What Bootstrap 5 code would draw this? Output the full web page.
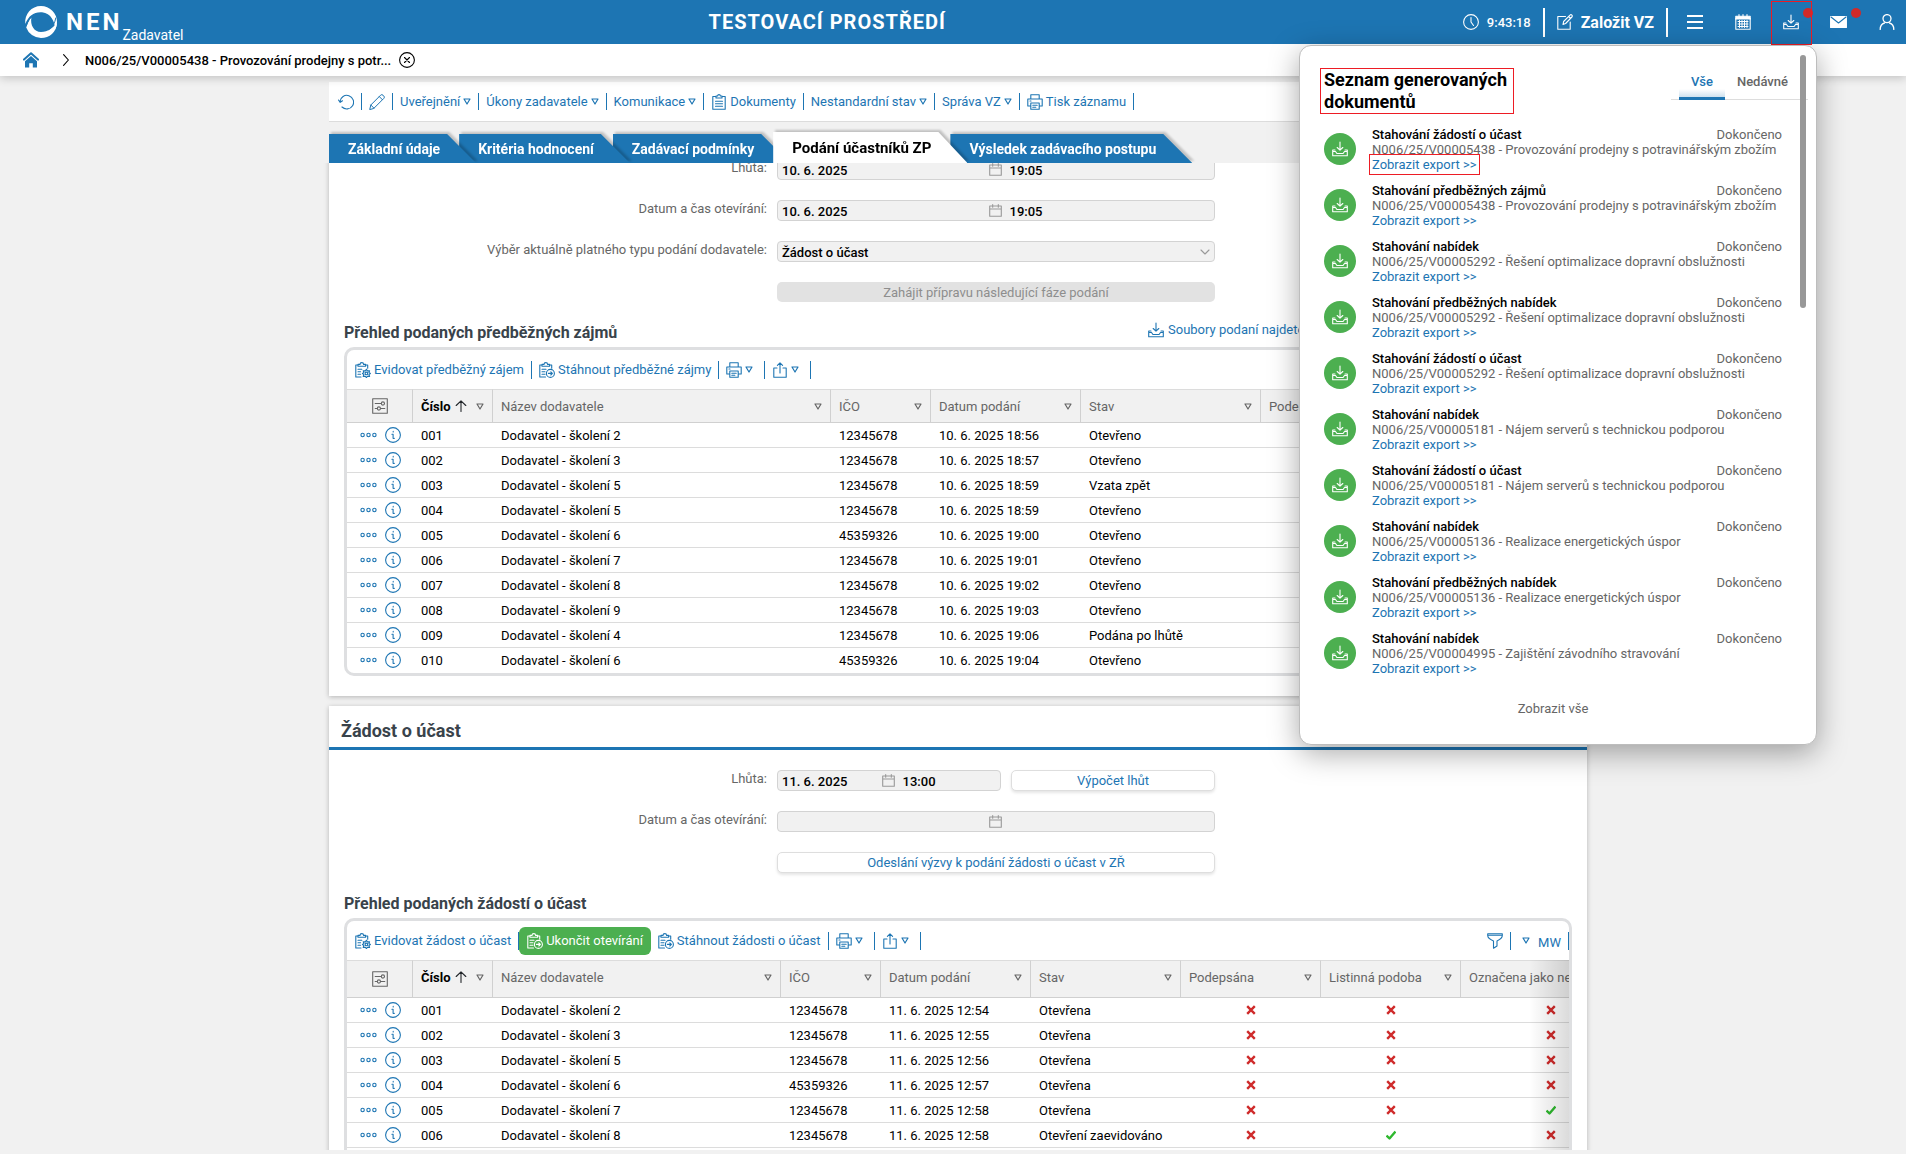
<!DOCTYPE html>
<html lang="cs">
<head>
<meta charset="utf-8">
<meta name="viewport" content="width=device-width, initial-scale=1">
<title>NEN Zadavatel</title>
<link href="https://cdn.jsdelivr.net/npm/bootstrap@5.3.0/dist/css/bootstrap.min.css" rel="stylesheet">
<style>
:root{--nen:#1d75b3;--line:#dcdcdc;--soft:#f1f1f1;--mute:#666}
body{font-family:Roboto,"Liberation Sans",sans-serif;font-size:13px;line-height:15px;color:#000;background:var(--soft)}
svg{display:block;flex:none;fill:none;stroke:currentColor;stroke-width:1.1;stroke-linecap:round;stroke-linejoin:round}
a{color:var(--nen);text-decoration:none}
button{color:inherit}
.ico{width:16px;height:16px}
.tri{width:8px;height:7px;stroke-width:1.2}
.plain{border:0;background:none;padding:0;font:inherit}
/* top bar */
.topbar{height:44px;background:var(--nen);color:#fff;z-index:30}
.topbar a{color:#fff}
.brand-name{font-size:24px;line-height:24px;font-weight:700;letter-spacing:3px}
.brand-role{font-size:14px;line-height:16px;padding-top:26px}
.env{font-size:20px;line-height:24px;font-weight:700;letter-spacing:1px}
.bar-sep{width:2px;height:29px;background:#fff}
.clock{font-weight:500}
.create{font-size:16px;font-weight:700}
.tools{gap:10px}
.tool{width:38px;height:40px}
.dot{width:10px;height:10px;top:6px;right:-3px;background:#d02a2a;border-radius:50%}
.hot::after{content:"";position:absolute;inset:-1px -2px -3px -1px;border:1px solid #ed1c24}
/* breadcrumb */
.crumbs{height:32px;background:#fff;box-shadow:0 2px 10px rgba(0,0,0,.2);z-index:20;padding-left:23px}
.crumbs strong{font-weight:500}
/* page column */
.page{width:1258px;max-width:100%}
.page-wrap{padding-left:10px;padding-top:6px;margin-bottom:4px;min-height:0}
.record-bar{height:40px;background:#fff;border-bottom:1px solid var(--line);color:var(--nen);padding-left:2px}
.act{display:flex;align-items:center;gap:3px;padding:0 7px;height:17px;border-right:1px solid var(--nen);color:var(--nen);white-space:nowrap}
.tabs{height:41px}
.tab-shell{filter:drop-shadow(2px -2px 1px rgba(0,0,0,.2));margin-right:-17px;position:relative;z-index:3}
.tab-shell:nth-child(1){z-index:5}.tab-shell:nth-child(2){z-index:4}.tab-shell:nth-child(4){z-index:6}.tab-shell:nth-child(5){z-index:1}
.tab-btn{height:29px;padding:1px 36px 0 19px;border:0;background:var(--nen);color:#fff;font-size:14px;font-weight:700;clip-path:polygon(0 0,calc(100% - 29px) 0,100% 100%,0 100%);white-space:nowrap}
.tab-btn.current{height:31px;background:#fff;color:#000;font-size:15px}
.scroller{overflow:hidden;min-height:0}
.sheet{background:#fff;box-shadow:0 1px 5px rgba(0,0,0,.25)}
.sheet-first{margin-top:-4px;padding-bottom:20px;margin-bottom:10px}
/* form */
.frow{display:grid;grid-template-columns:minmax(0,448fr) minmax(0,438fr) minmax(0,372fr);margin-bottom:20px;height:21px}
.frow label{text-align:right;padding:1px 10px 0 0;color:var(--mute)}
.duo{gap:10px}
.duo .box{flex-grow:11}
.duo .ghost{flex:10 1 0}
.box{height:21px;border:1px solid #d3d3d3;border-radius:4px;background:var(--soft);color:#999;flex:1 1 0;min-width:0}
.box input{border:0;background:none;font-size:13px;font-weight:500;line-height:15px;color:#000;padding:2px 0 0 4px;flex:1 1 0;min-width:0}
.box input+svg+input{padding-left:8px}
.box .cal{width:13px;height:13px;margin-left:2px}
.pick{width:100%;appearance:none;border:0;background:none;padding:1px 4px 0;font-weight:500;line-height:17px;color:#000}
.wide{height:20px;border:0;border-radius:5px;background:#e2e2e2;color:#8e8e8e;width:100%;padding:0}
.ghost{background:#fff;border:1px solid #dedede;color:var(--nen);box-shadow:0 2px 3px rgba(0,0,0,.1);height:21px}
.sheet-title + .frow{margin-top:20px}
h3.sub{font-size:16px;line-height:18px;font-weight:700;color:#39434b;margin:0;padding:2px 15px 5px}
.sub-row{padding-top:19px}
.files{width:439px}
.sheet-title{font-size:18px;line-height:22px;font-weight:700;color:#39434b;margin:0;padding:14px 12px 5px;border-bottom:3px solid var(--nen)}
/* grid panel */
.gridbox{border:3px solid #dedfe1;border-radius:10px;margin:0 15px;overflow:hidden;position:relative}
.gridbar{height:39px;padding-left:1px}
.gridbar .act{height:18px}
.go{height:28px;border:0;border-radius:6px;background:#4caf50;color:#fff;padding:0 8px;gap:3px}
.fade-end::after{content:"";position:absolute;right:0;top:39px;bottom:0;width:40px;background:linear-gradient(90deg,rgba(0,0,0,0),rgba(0,0,0,.14))}
.dtab{table-layout:fixed;border-collapse:separate;border-spacing:0}
.dtab th{font-weight:400;color:var(--mute);background:var(--soft);border-top:1px solid var(--line);border-bottom:1px solid #d0d0d0;border-right:1px solid #d0d0d0;padding:0 8px;height:34px;white-space:nowrap;overflow:hidden}
.tall th{height:38px}
.tall th+th{padding-bottom:4px}
.dtab th b{color:#000;font-weight:700}
.dtab td{height:25px;border-bottom:1px solid var(--line);padding:0 8px;white-space:nowrap}
.dtab tr:last-child td{border-bottom-color:transparent}
.rowtools{color:var(--nen)}
.dtab td svg.flag{margin:auto;width:10px;height:10px;stroke-width:2.4;stroke-linecap:butt}
.dtab td .flagok{color:#2eb82e}.dtab td .flagno{color:#cf2b2b}
/* generated documents */
.drop{position:absolute;top:45px;right:89px;width:518px;background:#fff;border:1px solid #bdbdbd;border-radius:12px;box-shadow:0 8px 30px rgba(0,0,0,.35);color:#000;padding:22px 34px 28px 24px}
.drop h2{font-size:18px;line-height:22px;font-weight:700;margin:0 0 0 -4px;width:194px;border:1px solid #ed1c24;padding:0 3px}
.drop .bar{position:absolute;right:10px;top:9px;width:6px;height:253px;border-radius:3px;background:#989898}
.swap{border-bottom:1px solid #ddd;margin-right:-26px;padding:0 8px;height:32px;color:#666;font-weight:500}
.swap button{padding:0 12px 6px;height:32px;font-weight:500}
.swap .now{color:var(--nen);padding-bottom:3px;border-bottom:3px solid var(--nen);background:linear-gradient(0deg,rgba(29,117,179,.22),rgba(29,117,179,0) 8px)}
.docs{margin:13px 0 25px}
.doc{margin-bottom:11px}
.doc:last-child{margin-bottom:0}
.disc{width:32px;height:32px;border-radius:50%;background:#4caf50;color:#fff;margin-bottom:2px}
.doc strong{font-weight:500}
.doc .note{color:#666}
.boxed{outline:1px solid #ed1c24;outline-offset:2px}
.drop a.all{color:#666}
.doc a{color:var(--nen)}
</style>
<script src="https://cdn.jsdelivr.net/npm/bootstrap@5.3.0/dist/js/bootstrap.bundle.min.js"></script>
</head>
<body class="vh-100 overflow-hidden d-flex flex-column">
<svg width="0" height="0" class="position-absolute" aria-hidden="true">
<symbol id="down" viewBox="0 0 16 16"><path d="M8 1v8M5.2 6.5 8 9.2l2.8-2.7M3 9H.7v5.8h14.6V9H13M.9 10.5h2.6l1.4 2h6.2l1.4-2h2.6"/></symbol>
<symbol id="print" viewBox="0 0 16 16"><path d="M3.8 5V.8h8.4V5M3.8 12H.8V5h14.4v7h-3M3.8 9h8.4v6.3H3.8zM5.8 11.2h4.4M5.8 13.2h3M3 7h1"/></symbol>
<symbol id="share" viewBox="0 0 16 16"><path d="M5 6H1.8v9.3h12.4V6H11M8 11V1M5.4 3.4 8 .8l2.6 2.6"/></symbol>
<symbol id="tri" viewBox="0 0 8 7"><path d="M1 1h6L4 6z"/></symbol>
<symbol id="board" viewBox="0 0 16 16"><path d="M5 2.5H1.8v12.8h12.4V2.5H11M5 4V2h1.6a1.4 1.4 0 0 1 2.8 0H11v2zM4.5 7.2h7M4.5 9.7h7M4.5 12.2h7"/></symbol>
<symbol id="boardgear" viewBox="0 0 16 16"><path d="M6 15H.8V3H3M10.5 3h2.2v3.2M3 4.3V2.4h2a1.8 1.8 0 0 1 3.6 0h2v1.9zM3 7.2h3.8M3 9.7h2.6M3 12.2h2.6"/><circle cx="11.4" cy="11.4" r="1.3"/><path d="m11.4 7.2 1 1.7 2.2-.2-.7 1.8 1.5 1-1.5 1 .7 1.9-2.2-.2-1 1.400-1-1.400-2.200.2.7-1.900-1.500-1 1.500-1-.7-1.800 2.200.2z"/></symbol>
<symbol id="boardgo" viewBox="0 0 16 16"><path d="M6.5 15H.8V3H3M10.5 3h2.2v3.2M3 4.3V2.4h2a1.8 1.8 0 0 1 3.6 0h2v1.9zM3 7.2h4M3 9.7h3M3 12.2h3"/><circle cx="11.4" cy="11.4" r="4"/><path d="M9.4 11.4h3.8M11.8 9.8l1.6 1.6-1.6 1.6"/></symbol>
<symbol id="cal" viewBox="0 0 13 13"><path d="M.7 2h11.6v10.3H.7zM.7 5h11.6M3.7.6v2.6M9.3.6v2.6"/></symbol>
<symbol id="dots" viewBox="0 0 17 16"><circle cx="2.6" cy="8" r="1.7"/><circle cx="8.5" cy="8" r="1.7"/><circle cx="14.4" cy="8" r="1.7"/></symbol>
<symbol id="info" viewBox="0 0 16 16"><circle cx="8" cy="8" r="7.4"/><path d="M8.2 4.4v.6M6.9 7.3h1.2v3.6q0 .8 1.2.5"/></symbol>
<symbol id="setup" viewBox="0 0 16 16"><path d="M.7.7h14.6v14.6H.7zM3.2 5.5h6M3.2 10.5h2M8.6 10.5h4.2"/><circle cx="10.9" cy="5.5" r="1.6"/><circle cx="6.9" cy="10.5" r="1.6"/></symbol>
<symbol id="up" viewBox="0 0 12 12"><path d="M6 11.5V1M1.2 5.5 6 .8l4.8 4.7"/></symbol>
<symbol id="no" viewBox="0 0 10 10"><path d="m1.2 1.2 7.6 7.6M8.8 1.2 1.2 8.8"/></symbol>
<symbol id="ok" viewBox="0 0 10 10"><path d="m.5 5.5 3 3 6-7"/></symbol>
</svg>

<header class="topbar position-relative d-flex align-items-center justify-content-between flex-shrink-0">
  <a href="#" class="d-flex align-items-center ps-4">
    <svg width="34" height="34" viewBox="0 0 34 34"><g fill="#fff" stroke="none"><path d="M17 1a16 16 0 0 1 16 16c0 3-.7 5.2-2 7.500C31.200 17 27 8 18 7.200 10 6.600 4.600 10.500 1.300 19 .3 9 7.500 1 17 1z"/><path d="M17 33A16 16 0 0 1 2.200 22.500C4 17 5 15 7.400 12.500 6 20 10 27 17 27c7 0 13-5 15.900-9C32.500 27 25.500 33 17 33z"/></g><path d="M2.200 21C4 16 6 12.500 9.500 9.800M31.800 13C31 18 28.500 21.500 25 24.500" stroke="#1d75b3" stroke-width="1"/></svg>
    <span class="brand-name ps-2">NEN</span><span class="brand-role">Zadavatel</span>
  </a>
  <span class="env ps-2">TESTOVACÍ PROSTŘEDÍ</span>
  <div class="d-flex align-items-center">
    <svg class="ico me-2" viewBox="0 0 16 16"><circle cx="8" cy="8" r="7.4"/><path d="M8 3.5V8l2.5 3.5"/></svg>
    <span class="clock me-2">9:43:18</span>
    <span class="bar-sep ms-1 me-2"></span>
    <a href="#" class="d-flex align-items-center gap-2 px-1"><svg class="ico" viewBox="0 0 16 16"><path d="M8.5 2.5H.8v12.7h12.4V8M6 10.5l.6-3L13 1.100a1.300 1.300 0 0 1 1.900 1.900L8.600 9.500zM11.600 2.500l1.900 1.900"/></svg><span class="create">Založit VZ</span></a>
    <span class="bar-sep ms-2"></span>
    <div class="tools d-flex ms-2">
      <button class="plain tool d-flex align-items-center justify-content-center" aria-label="Menu"><svg class="ico" viewBox="0 0 16 16"><path stroke-width="2" stroke-linecap="butt" d="M0 2h16M0 8h16M0 14h16"/></svg></button>
      <button class="plain tool d-flex align-items-center justify-content-center" aria-label="Kalendář"><svg class="ico" viewBox="0 0 16 16"><path d="M.8 5V2.300h14.400V5z" fill="#fff"/><path d="M.8 4.500v10.700h14.400V4.500M4 .6v2M8 .6v2M12 .6v2"/><path stroke-width="1" d="M3 7.500h10M3 10h10M3 12.500h10M4.500 6.500v7M7 6.500v7M9.500 6.500v7M12 6.500v7"/></svg></button>
      <button class="plain tool hot position-relative d-flex align-items-center justify-content-center" aria-label="Generované dokumenty"><svg class="ico"><use href="#down"/></svg><span class="dot position-absolute"></span></button>
      <button class="plain tool position-relative d-flex align-items-center justify-content-center" aria-label="Zprávy"><svg width="17" height="12" viewBox="0 0 17 12"><path d="M.6.6h15.800v10.800H.6z" fill="#fff"/><path d="M1 1l7.500 6L16 1" stroke="#1d75b3"/></svg><span class="dot position-absolute"></span></button>
      <button class="plain tool d-flex align-items-center justify-content-center" aria-label="Uživatel"><svg class="ico" viewBox="0 0 16 16"><g stroke-width="1.3"><circle cx="8" cy="4.600" r="4"/><path d="M1.200 15.500c0-4 2.500-6 4.300-6.500M14.800 15.500c0-4-2.500-6-4.300-6.500"/></g></svg></button>
    </div>
  </div>

  <section class="drop">
    <span class="bar"></span>
    <div class="d-flex justify-content-between">
      <h2>Seznam generovaných dokumentů</h2>
      <div class="swap d-flex"><button class="plain now">Vše</button><button class="plain">Nedávné</button></div>
    </div>
    <div class="docs" id="docs"></div>
    <div class="text-center"><a class="all" href="#">Zobrazit vše</a></div>
  </section>
</header>

<nav class="crumbs d-flex align-items-center position-relative flex-shrink-0" aria-label="Drobečková navigace">
  <a href="#" aria-label="Domů"><svg class="ico" viewBox="0 0 16 16"><path d="M1 7.600 8 1.200l7 6.400" stroke-width="2"/><path d="M2 9.300 8 4l6 5.300V15.500H9.800v-4.300H6.200v4.300H2z" fill="currentColor" stroke="none"/></svg></a>
  <svg class="ms-4 me-3" width="6" height="12" viewBox="0 0 6 12"><path d="M.6.6 5.400 6 .6 11.400"/></svg>
  <strong>N006/25/V00005438 - Provozování prodejny s potr...</strong>
  <button class="plain ms-2" aria-label="Zavřít"><svg class="ico" viewBox="0 0 16 16"><circle cx="8" cy="8" r="7.400"/><path d="m5.500 5.500 5 5M10.500 5.500l-5 5"/></svg></button>
</nav>

<main class="page-wrap flex-grow-1 d-flex flex-column align-items-center">
  <div class="page record-bar d-flex align-items-center flex-shrink-0">
    <a href="#" class="act" aria-label="Obnovit"><svg class="ico" viewBox="0 0 16 16"><path d="M2 7.500A6.800 6.800 0 1 1 4 13M.5 6 2.200 8.300 4.500 6.800"/></svg></a>
    <a href="#" class="act" aria-label="Upravit"><svg class="ico" viewBox="0 0 16 16"><path stroke-width="1" d="m.8 15.200 1-4.200L11.600 1.200a1.700 1.700 0 0 1 2.400 0l.8.800a1.700 1.700 0 0 1 0 2.400L5 14.200zM1.800 11 5 14.200M10.300 2.600l3.100 3.100"/></svg></a>
    <a href="#" class="act">Uveřejnění <svg class="tri"><use href="#tri"/></svg></a>
    <a href="#" class="act">Úkony zadavatele <svg class="tri"><use href="#tri"/></svg></a>
    <a href="#" class="act">Komunikace <svg class="tri"><use href="#tri"/></svg></a>
    <a href="#" class="act"><svg class="ico"><use href="#board"/></svg>Dokumenty</a>
    <a href="#" class="act">Nestandardní stav <svg class="tri"><use href="#tri"/></svg></a>
    <a href="#" class="act">Správa VZ <svg class="tri"><use href="#tri"/></svg></a>
    <a href="#" class="act"><svg class="ico"><use href="#print"/></svg>Tisk záznamu</a>
  </div>
  <div class="page tabs d-flex align-items-end flex-shrink-0">
    <div class="tab-shell"><button class="tab-btn">Základní údaje</button></div>
    <div class="tab-shell"><button class="tab-btn">Kritéria hodnocení</button></div>
    <div class="tab-shell"><button class="tab-btn">Zadávací podmínky</button></div>
    <div class="tab-shell"><button class="tab-btn current">Podání účastníků ZP</button></div>
    <div class="tab-shell"><button class="tab-btn">Výsledek zadávacího postupu</button></div>
  </div>

  <div class="scroller w-100 flex-grow-1">
    <section class="page sheet sheet-first mx-auto">
      <div class="frow"><label for="d1">Lhůta:</label>
        <div class="box d-flex align-items-center"><input id="d1" value="10. 6. 2025"><svg class="cal"><use href="#cal"/></svg><input aria-label="Čas lhůty" value="19:05"></div></div>
      <div class="frow"><label for="d2">Datum a čas otevírání:</label>
        <div class="box d-flex align-items-center"><input id="d2" value="10. 6. 2025"><svg class="cal"><use href="#cal"/></svg><input aria-label="Čas otevírání" value="19:05"></div></div>
      <div class="frow"><label for="d3">Výběr aktuálně platného typu podání dodavatele:</label>
        <div class="box d-flex align-items-center pe-1"><select id="d3" class="pick"><option>Žádost o účast</option></select><svg width="10" height="6" viewBox="0 0 10 6"><path d="m1 1 4 4 4-4"/></svg></div></div>
      <div class="frow mb-0"><span></span><button class="wide" disabled>Zahájit přípravu následující fáze podání</button></div>
      <div class="sub-row d-flex justify-content-between">
        <h3 class="sub">Přehled podaných předběžných zájmů</h3>
        <a href="#" class="files d-flex gap-1 text-nowrap align-items-start"><svg class="ico"><use href="#down"/></svg>Soubory podaní najdete v seznamu generovaných dokumentů</a>
      </div>
      <div class="gridbox">
        <div class="gridbar d-flex align-items-center">
          <a href="#" class="act"><svg class="ico"><use href="#boardgear"/></svg>Evidovat předběžný zájem</a>
          <a href="#" class="act"><svg class="ico"><use href="#boardgo"/></svg>Stáhnout předběžné zájmy</a>
          <a href="#" class="act" aria-label="Tisk"><svg class="ico"><use href="#print"/></svg><svg class="tri me-1"><use href="#tri"/></svg></a>
          <a href="#" class="act" aria-label="Export"><svg class="ico"><use href="#share"/></svg><svg class="tri me-1"><use href="#tri"/></svg></a>
        </div>
        <table class="dtab" id="t1"></table>
      </div>
    </section>
    <section class="page sheet mx-auto">
      <h2 class="sheet-title">Žádost o účast</h2>
      <div class="frow"><label for="e1">Lhůta:</label>
        <div class="duo d-flex"><div class="box d-flex align-items-center"><input id="e1" value="11. 6. 2025"><svg class="cal"><use href="#cal"/></svg><input aria-label="Čas lhůty" value="13:00"></div><button class="wide ghost">Výpočet lhůt</button></div></div>
      <div class="frow"><label for="e2">Datum a čas otevírání:</label>
        <div class="box d-flex align-items-center"><input id="e2"><svg class="cal"><use href="#cal"/></svg><input aria-label="Čas otevírání"></div></div>
      <div class="frow"><span></span><button class="wide ghost">Odeslání výzvy k podání žádosti o účast v ZŘ</button></div>
      <h3 class="sub">Přehled podaných žádostí o účast</h3>
      <div class="gridbox fade-end">
        <div class="gridbar d-flex align-items-center">
          <a href="#" class="act"><svg class="ico"><use href="#boardgear"/></svg>Evidovat žádost o účast</a>
          <button class="go d-flex align-items-center"><svg class="ico"><use href="#boardgo"/></svg>Ukončit otevírání</button>
          <a href="#" class="act"><svg class="ico"><use href="#boardgo"/></svg>Stáhnout žádosti o účast</a>
          <a href="#" class="act" aria-label="Tisk"><svg class="ico"><use href="#print"/></svg><svg class="tri me-1"><use href="#tri"/></svg></a>
          <a href="#" class="act" aria-label="Export"><svg class="ico"><use href="#share"/></svg><svg class="tri me-1"><use href="#tri"/></svg></a>
          <a href="#" class="act ms-auto" aria-label="Filtr"><svg class="ico" viewBox="0 0 16 16"><path d="M.7.8h14.600v1.800q0 3-5.300 5.400v5L6.500 15.200V8Q.7 5.600.7 2.600zM.7 2.300h14.600"/></svg></a>
          <a href="#" class="act gap-2"><svg class="tri ms-1"><use href="#tri"/></svg><span class="pt-1">MW</span></a>
        </div>
        <table class="dtab tall" id="t2"></table>
      </div>
    </section>
  </div>
</main>

<script>
const icon=(id,cls,extra='')=>`<svg class="${cls}" ${extra}><use href="#${id}"/></svg>`;
const flag=v=>v==='x'?icon('no','flag flagno'):v==='v'?icon('ok','flag flagok'):v;
function grid(id,cols,rows){
  const el=document.getElementById(id);
  el.style.width=cols.reduce((s,c)=>s+c[1],66)+'px';
  const head=cols.map((c,i)=>`<th style="width:${c[1]}px"><div class="d-flex align-items-center">${i?`<span>${c[0]}</span>`:`<b>${c[0]}</b>${icon('up','text-dark ms-1','width="12" height="12"')}`}<span class="ms-auto">${icon('tri','tri')}</span></div></th>`).join('');
  const body=rows.map(r=>`<tr><td><div class="rowtools d-flex align-items-center justify-content-center gap-2"><button class="plain" aria-label="Akce">${icon('dots','','width="17" height="16"')}</button><button class="plain" aria-label="Detail">${icon('info','ico')}</button></div></td>${cols.map((c,i)=>`<td>${flag(r[i]||'')}</td>`).join('')}</tr>`).join('');
  el.innerHTML=`<thead><tr><th style="width:66px" aria-label="Nastavení">${icon('setup','ico mx-auto')}</th>${head}</tr></thead><tbody>${body}</tbody>`;
}
const I='12345678',J='45359326',D='Dodavatel - školení ';
grid('t1',[['Číslo',80],['Název dodavatele',338],['IČO',100],['Datum podání',150],['Stav',180],['Podepsána',140],['Listinná podoba',140]],
 [[2,I,'18:56'],[3,I,'18:57'],[5,I,'18:59','Vzata zpět'],[5,I,'18:59'],[6,J,'19:00'],[7,I,'19:01'],[8,I,'19:02'],[9,I,'19:03'],[4,I,'19:06','Podána po lhůtě'],[6,J,'19:04']]
 .map((r,i)=>[String(i+1).padStart(3,'0'),D+r[0],r[1],'10. 6. 2025 '+r[2],r[3]||'Otevřeno']));
grid('t2',[['Číslo',80],['Název dodavatele',288],['IČO',100],['Datum podání',150],['Stav',150],['Podepsána',140],['Listinná podoba',140],['Označena jako neplatná',180]],
 [[2,I,'12:54'],[3,I,'12:55'],[5,I,'12:56'],[6,J,'12:57'],[7,I,'12:58','Otevřena','x','v'],[8,I,'12:58','Otevření zaevidováno','v','x']]
 .map((r,i)=>[String(i+1).padStart(3,'0'),D+r[0],r[1],'11. 6. 2025 '+r[2],r[3]||'Otevřena','x',r[4]||'x',r[5]||'x']).concat([[]]));
const P='Provozování prodejny s potravinářským zbožím',O='Řešení optimalizace dopravní obslužnosti',N='Nájem serverů s technickou podporou',E='Realizace energetických úspor';
document.getElementById('docs').innerHTML=[['žádostí o účast','5438',P],['předběžných zájmů','5438',P],['nabídek','5292',O],['předběžných nabídek','5292',O],['žádostí o účast','5292',O],['nabídek','5181',N],['žádostí o účast','5181',N],['nabídek','5136',E],['předběžných nabídek','5136',E],['nabídek','4995','Zajištění závodního stravování']]
 .map((d,i)=>`<div class="doc d-flex align-items-center gap-3"><span class="disc d-flex align-items-center justify-content-center">${icon('down','ico')}</span><div class="flex-grow-1"><div class="d-flex justify-content-between"><strong>Stahování ${d[0]}</strong><span class="note">Dokončeno</span></div><div class="note text-nowrap">N006/25/V0000${d[1]} - ${d[2]}</div><a href="#"${i?'':' class="boxed"'}>Zobrazit export &gt;&gt;</a></div></div>`).join('');
</script>
</body>
</html>
